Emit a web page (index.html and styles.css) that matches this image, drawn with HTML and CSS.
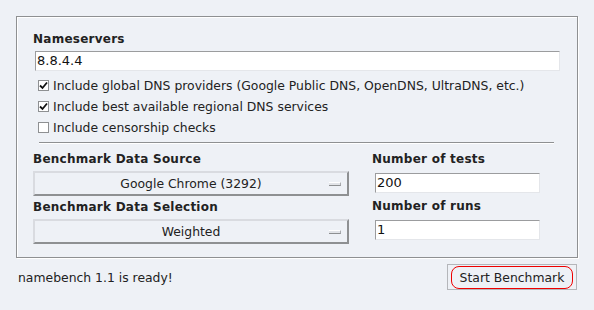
FILE: index.html
```html
<!DOCTYPE html>
<html lang="en">
<head>
  <meta charset="UTF-8" />
  <title>namebench</title>
  <link rel="stylesheet" href="styles.css">
</head>
<body>

<div class="window">
  <div class="group">
    <div class="label">Nameservers</div>
    <div class="field wide">8.8.4.4</div>

    <div class="checks">
      <div class="check">
        <span class="box"><svg width="9" height="9" viewBox="0 0 9 9"><path d="M1 4.5 L3.5 7 L8 1.5" fill="none" stroke="#111" stroke-width="1.8"/></svg></span>
        Include global DNS providers (Google Public DNS, OpenDNS, UltraDNS, etc.)
      </div>
      <div class="check">
        <span class="box"><svg width="9" height="9" viewBox="0 0 9 9"><path d="M1 4.5 L3.5 7 L8 1.5" fill="none" stroke="#111" stroke-width="1.8"/></svg></span>
        Include best available regional DNS services
      </div>
      <div class="check">
        <span class="box"></span>
        Include censorship checks
      </div>
    </div>

    <hr class="sep">

    <div class="options">
      <div class="col-left">
        <div class="label">Benchmark Data Source</div>
        <div class="combo">Google Chrome (3292)<span class="arrow"></span></div>
        <div class="label">Benchmark Data Selection</div>
        <div class="combo">Weighted<span class="arrow"></span></div>
      </div>
      <div class="col-right">
        <div class="label">Number of tests</div>
        <div class="field small">200</div>
        <div class="label">Number of runs</div>
        <div class="field small">1</div>
      </div>
    </div>
  </div>

  <div class="statusbar">
    <span class="status">namebench 1.1 is ready!</span>
    <button class="start-btn"><span class="focus">Start Benchmark</span></button>
  </div>
</div>

</body>
</html>
```

FILE: styles.css
```css
* { box-sizing: border-box; margin: 0; padding: 0; }
body {
  font-family: 'DejaVu Sans', sans-serif;
  font-size: 12.4px;
  background: #eef1f6;
  color: #222;
}

.window {
  padding: 16px 16px 0 16px;
}

.group {
  border: 1px solid #8e9092;
  box-shadow: inset 1px 1px 0 #fff, 1px 1px 0 #fff;
  padding: 14px 17px 16px 16px;
  height: 242px;
}

.label {
  font-weight: bold;
  font-size: 12px;
  line-height: 16px;
  letter-spacing: 0.25px;
}

.field {
  background: #fff;
  border: 1px solid;
  border-color: #9b9c9e #e4e6ea #e4e6ea #9b9c9e;
  font-size: 13px;
  line-height: 17px;
  padding: 0 1px;
  color: #111;
}

.field.wide {
  margin: 4px 0 0 2px;
  width: 525px;
  height: 20px;
}

.checks {
  margin-top: 4px;
  padding-left: 5px;
}

.check {
  display: flex;
  align-items: center;
  height: 21px;
}

.box {
  width: 11px;
  height: 11px;
  margin-right: 4px;
  background: #fff;
  border: 1px solid #8e9092;
  display: flex;
  align-items: center;
  justify-content: center;
}

.sep {
  border: none;
  border-top: 1px solid #8e9092;
  border-bottom: 1px solid #fff;
  margin: 4px 6px 0 6px;
}

.options {
  display: flex;
  gap: 23px;
  margin-top: 7px;
}

.col-left { width: 316px; }
.col-right { width: 170px; }

.combo {
  position: relative;
  height: 25px;
  margin: 4px 0 3px 0;
  border: 2px solid;
  border-color: #d9dbe0 #8e9092 #8e9092 #d9dbe0;
  text-align: center;
  line-height: 21px;
  color: #222;
}

.arrow {
  position: absolute;
  right: 6px;
  top: 9px;
  width: 12px;
  height: 4px;
  background: #e2e4e8;
  border-top: 1px solid #fff;
  border-bottom: 1px solid #8e9092;
  border-right: 1px solid #a8aaae;
}

.field.small {
  margin: 6px 0 5px 3px;
  width: 165px;
  height: 20px;
}

.statusbar {
  display: flex;
  justify-content: space-between;
  align-items: center;
  margin-top: 6px;
  padding: 0 1px 0 2px;
}

.start-btn {
  font-family: 'DejaVu Sans', sans-serif;
  font-size: 12.4px;
  color: #222;
  background: #eef1f6;
  border: 1px solid #b4b6ba;
  width: 130px;
  height: 26px;
  padding: 1px 3px;
}

.focus {
  display: block;
  height: 23px;
  line-height: 21px;
  border: 1px solid #e00;
  border-radius: 8px;
}
```
